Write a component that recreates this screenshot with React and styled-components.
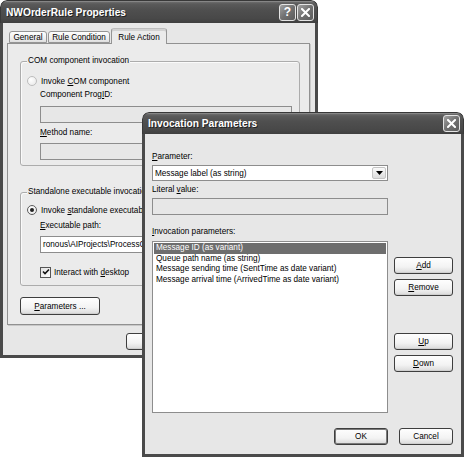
import React from 'react';
import styled, { createGlobalStyle } from 'styled-components';

const Global = createGlobalStyle`
  html, body { margin: 0; padding: 0; background: #fff; }
  body { font-family: "Liberation Sans", Arial, sans-serif; font-size: 8.2px; color: #000; }
  * { box-sizing: border-box; }
`;

const FRAME = '#4a4a4a';
const FACE = '#e7e7e7';
const PANEL = '#ebebeb';

const Desktop = styled.div`
  position: relative;
  width: 464px;
  height: 457px;
  overflow: hidden;
  background: #fff;
`;

const Window = styled.section`
  position: absolute;
  left: ${p => p.$x}px;
  top: ${p => p.$y}px;
  width: ${p => p.$w}px;
  height: ${p => p.$h}px;
  display: flex;
  flex-direction: column;
  border-radius: 7px 7px 0 0;
  overflow: hidden;
`;

const TitleBar = styled.header`
  flex: 0 0 ${p => p.$h}px;
  display: flex;
  align-items: center;
  gap: 1px;
  padding: 0 3px 0 5px;
  background: linear-gradient(#a0a0a0 0, #6c6c6c 1px, #5a5a5a 3px, #4f4f4f 40%, #484848 80%, #3f3f3f 100%);
  border: 1px solid #383838;
  border-bottom: 0;
  border-radius: 7px 7px 0 0;
`;

const TitleText = styled.h1`
  flex: 1;
  margin: 0;
  font: bold 10.2px "Liberation Sans", Arial, sans-serif;
  color: #fff;
  text-shadow: 1px 1px 0 #222;
  white-space: nowrap;
  overflow: hidden;
`;

const CaptionButton = styled.span`
  width: 17px;
  height: 17px;
  border: 1px solid #e4e4e4;
  border-radius: 3px;
  background: linear-gradient(135deg, #a2a2a2 0%, #717171 50%, #5c5c5c 100%);
  display: flex;
  align-items: center;
  justify-content: center;
  color: #fff;
  font: bold 12px "Liberation Sans", Arial, sans-serif;
`;

const Frame = styled.div`
  flex: 1;
  display: flex;
  flex-direction: column;
  background: ${FACE};
  border: 3px solid ${FRAME};
  border-top: 0;
  padding: ${p => p.$pad};
`;

const TabStrip = styled.div`
  height: 20px;
  display: flex;
  align-items: flex-end;
  padding-left: 2px;
  position: relative;
  z-index: 1;
`;

const Tab = styled.div`
  width: ${p => p.$w}px;
  height: ${p => (p.$active ? 16 : 12)}px;
  margin-bottom: ${p => (p.$active ? -1 : 0)}px;
  margin-left: ${p => (p.$first ? 0 : 1)}px;
  border: 1px solid #959595;
  border-bottom: ${p => (p.$active ? 'none' : '1px solid #959595')};
  border-radius: 3px 3px 0 0;
  background: ${p => (p.$active ? PANEL : 'linear-gradient(#fefefe, #ececec 70%, #dedede)')};
  border-top-color: ${p => (p.$active ? '#bdbdbd' : '#959595')};
  box-shadow: ${p => (p.$active ? 'inset 0 2px 0 #d2d2d2' : 'none')};
  display: flex;
  align-items: center;
  justify-content: center;
  padding-top: ${p => (p.$active ? 1 : 0)}px;
  white-space: nowrap;
`;

const TabPanel = styled.div`
  border: 1px solid #919191;
  background: ${PANEL};
  padding: 17px 9px 9px 12px;
  display: flex;
  flex-direction: column;
  box-shadow: 1px 1px 0 #c8c8c8;
`;

const Group = styled.div`
  position: relative;
  border: 1px solid #acacac;
  border-radius: 3px;
  margin-top: ${p => p.$mt || 0}px;
  padding: ${p => p.$pad};
  display: flex;
  flex-direction: column;
  box-shadow: inset 1px 1px 0 #fafafa;
`;

const Legend = styled.span`
  position: absolute;
  top: -7px;
  left: 6px;
  padding: 0 1px;
  line-height: 12px;
  background: ${PANEL};
  white-space: nowrap;
`;

const OptionRow = styled.div`
  display: flex;
  align-items: center;
  gap: ${p => p.$gap || 4}px;
  height: 12px;
  margin-top: ${p => p.$mt || 0}px;
  margin-left: ${p => p.$indent || 0}px;
  white-space: nowrap;
`;

const Radio = styled.span`
  flex: 0 0 10px;
  width: 10px;
  height: 10px;
  border-radius: 50%;
  border: 1px solid ${p => (p.$checked ? '#5c5c5c' : '#bdbdbd')};
  background: radial-gradient(circle at 35% 35%, #fff, #e6e6e6);
  display: flex;
  align-items: center;
  justify-content: center;
  &::after {
    content: '';
    width: 4px;
    height: 4px;
    border-radius: 50%;
    background: ${p => (p.$checked ? '#222' : 'transparent')};
  }
`;

const Check = styled.span`
  flex: 0 0 11px;
  width: 11px;
  height: 11px;
  border: 1px solid #555;
  background: linear-gradient(135deg, #e2e2e2, #fbfbfb);
  display: flex;
  align-items: center;
  justify-content: center;
`;

const FieldLabel = styled.div`
  height: 12px;
  line-height: 12px;
  margin-top: ${p => p.$mt || 0}px;
  margin-left: ${p => p.$indent || 0}px;
  white-space: nowrap;
`;

const TextBox = styled.div`
  height: ${p => p.$h || 17}px;
  width: ${p => (p.$w ? `${p.$w}px` : 'auto')};
  margin-top: ${p => p.$mt || 0}px;
  margin-left: ${p => p.$indent || 0}px;
  border: 1px solid #8d8d8d;
  background: ${p => (p.$disabled ? FACE : '#fff')};
  padding: 0 2px;
  line-height: 15px;
  white-space: nowrap;
  overflow: hidden;
`;

const Combo = styled.div`
  height: 16px;
  width: 236px;
  margin-top: ${p => p.$mt || 0}px;
  border: 1px solid #8d8d8d;
  background: #fff;
  display: flex;
  align-items: center;
  padding: 1px 1px 1px 2px;
`;

const ComboText = styled.span`
  flex: 1;
  white-space: nowrap;
`;

const ComboArrow = styled.span`
  width: 14px;
  height: 12px;
  border: 1px solid #c4c4c4;
  border-radius: 2px;
  background: linear-gradient(#fafafa, #dcdcdc);
  display: flex;
  align-items: center;
  justify-content: center;
`;

const Button = styled.div`
  width: ${p => p.$w}px;
  height: ${p => p.$h || 17}px;
  margin-top: ${p => p.$mt || 0}px;
  border: 1px solid #3e3e3e;
  border-radius: 3px;
  background: linear-gradient(#fefefe, #f3f3f3 60%, #dadada);
  box-shadow: ${p => (p.$default ? 'inset 0 0 0 1px #7a7a7a' : 'inset 0 -1px 0 #cfcfcf')};
  display: flex;
  align-items: center;
  justify-content: center;
  white-space: nowrap;
  align-self: ${p => p.$align || 'auto'};
`;

const Footer = styled.div`
  display: flex;
  justify-content: flex-end;
  gap: ${p => p.$gap}px;
  margin-top: ${p => p.$mt}px;
  padding-right: ${p => p.$pr || 0}px;
`;

const ListRow = styled.div`
  display: flex;
  gap: 6px;
  margin-top: 3px;
`;

const ListBox = styled.ul`
  width: 236px;
  height: 172px;
  margin: 0;
  padding: 1px;
  list-style: none;
  border: 1px solid #8d8d8d;
  background: #fff;
`;

const ListItem = styled.li`
  height: 10.67px;
  line-height: 10.67px;
  padding-left: 2px;
  white-space: nowrap;
  background: ${p => (p.$selected ? '#6e6e6e' : 'transparent')};
  color: ${p => (p.$selected ? '#fff' : '#000')};
`;

const SideColumn = styled.div`
  width: 59px;
  display: flex;
  flex-direction: column;
`;

const Close = () => (
  <svg width="9" height="9" viewBox="0 0 9 9">
    <path d="M1 1 L8 8 M8 1 L1 8" stroke="#fff" strokeWidth="2" strokeLinecap="square" />
  </svg>
);

const Arrow = () => (
  <svg width="7" height="4" viewBox="0 0 7 4">
    <path d="M0 0 H7 L3.5 4 Z" fill="#000" />
  </svg>
);

const Tick = () => (
  <svg width="8" height="8" viewBox="0 0 8 8">
    <path d="M1 3.5 L3 5.5 L7 1.5" stroke="#111" strokeWidth="1.6" fill="none" />
  </svg>
);

function PropertiesWindow() {
  return (
    <Window $x={0} $y={0} $w={318} $h={358}>
      <TitleBar $h={23}>
        <TitleText>NWOrderRule Properties</TitleText>
        <CaptionButton>?</CaptionButton>
        <CaptionButton><Close /></CaptionButton>
      </TitleBar>
      <Frame $pad="0 5px 5px 4px">
        <TabStrip>
          <Tab $first $w={38}>General</Tab>
          <Tab $w={62}>Rule Condition</Tab>
          <Tab $active $w={56}>Rule Action</Tab>
        </TabStrip>
        <TabPanel>
          <Group $pad="13px 7px 5px 6px">
            <Legend>COM component invocation</Legend>
            <OptionRow>
              <Radio />
              <span>Invoke <u>C</u>OM component</span>
            </OptionRow>
            <FieldLabel $mt={2} $indent={13}>Component Prog<u>I</u>D:</FieldLabel>
            <TextBox $mt={5} $indent={13} $disabled />
            <FieldLabel $mt={4} $indent={13}><u>M</u>ethod name:</FieldLabel>
            <TextBox $mt={4} $indent={13} $disabled />
          </Group>
          <Group $mt={26} $pad="11px 7px 7px 6px">
            <Legend>Standalone executable invocation</Legend>
            <OptionRow>
              <Radio $checked />
              <span>Invoke <u>s</u>tandalone executable</span>
            </OptionRow>
            <FieldLabel $mt={4} $indent={13}><u>E</u>xecutable path:</FieldLabel>
            <TextBox $mt={4} $indent={13}>ronous\AIProjects\ProcessOrders\bin\Debug\ProcessOrders.exe</TextBox>
            <OptionRow $mt={13} $indent={13} $gap={3}>
              <Check><Tick /></Check>
              <span>Interact with <u>d</u>esktop</span>
            </OptionRow>
          </Group>
          <Button $w={80} $h={18} $mt={11} $align="flex-start"><span><u>P</u>arameters ...</span></Button>
        </TabPanel>
        <Footer $gap={8} $mt={8} $pr={0}>
          <Button $w={56}>OK</Button>
          <Button $w={56}>Cancel</Button>
          <Button $w={56}><span><u>A</u>pply</span></Button>
        </Footer>
      </Frame>
    </Window>
  );
}

const items = [
  'Message ID (as variant)',
  'Queue path name (as string)',
  'Message sending time (SentTime as date variant)',
  'Message arrival time (ArrivedTime as date variant)',
];

function ParametersWindow() {
  return (
    <Window $x={142} $y={112} $w={322} $h={345}>
      <TitleBar $h={22}>
        <TitleText>Invocation Parameters</TitleText>
        <CaptionButton><Close /></CaptionButton>
      </TitleBar>
      <Frame $pad="17px 8px 9px 7px">
        <FieldLabel><u>P</u>arameter:</FieldLabel>
        <Combo $mt={2}>
          <ComboText>Message label (as string)</ComboText>
          <ComboArrow><Arrow /></ComboArrow>
        </Combo>
        <FieldLabel $mt={3}>Literal <u>v</u>alue:</FieldLabel>
        <TextBox $mt={2} $w={236} $disabled />
        <FieldLabel $mt={11}><u>I</u>nvocation parameters:</FieldLabel>
        <ListRow>
          <ListBox>
            {items.map((t, i) => (
              <ListItem key={t} $selected={i === 0}>{t}</ListItem>
            ))}
          </ListBox>
          <SideColumn>
            <Button $w={59} $mt={16}><span><u>A</u>dd</span></Button>
            <Button $w={59} $mt={5}><span><u>R</u>emove</span></Button>
            <Button $w={59} $mt={37}><span><u>U</u>p</span></Button>
            <Button $w={59} $mt={5}><span><u>D</u>own</span></Button>
          </SideColumn>
        </ListRow>
        <Footer $gap={11} $mt={15}>
          <Button $w={54} $default>OK</Button>
          <Button $w={54}>Cancel</Button>
        </Footer>
      </Frame>
    </Window>
  );
}

export default function App() {
  return (
    <>
      <Global />
      <Desktop>
        <PropertiesWindow />
        <ParametersWindow />
      </Desktop>
    </>
  );
}
